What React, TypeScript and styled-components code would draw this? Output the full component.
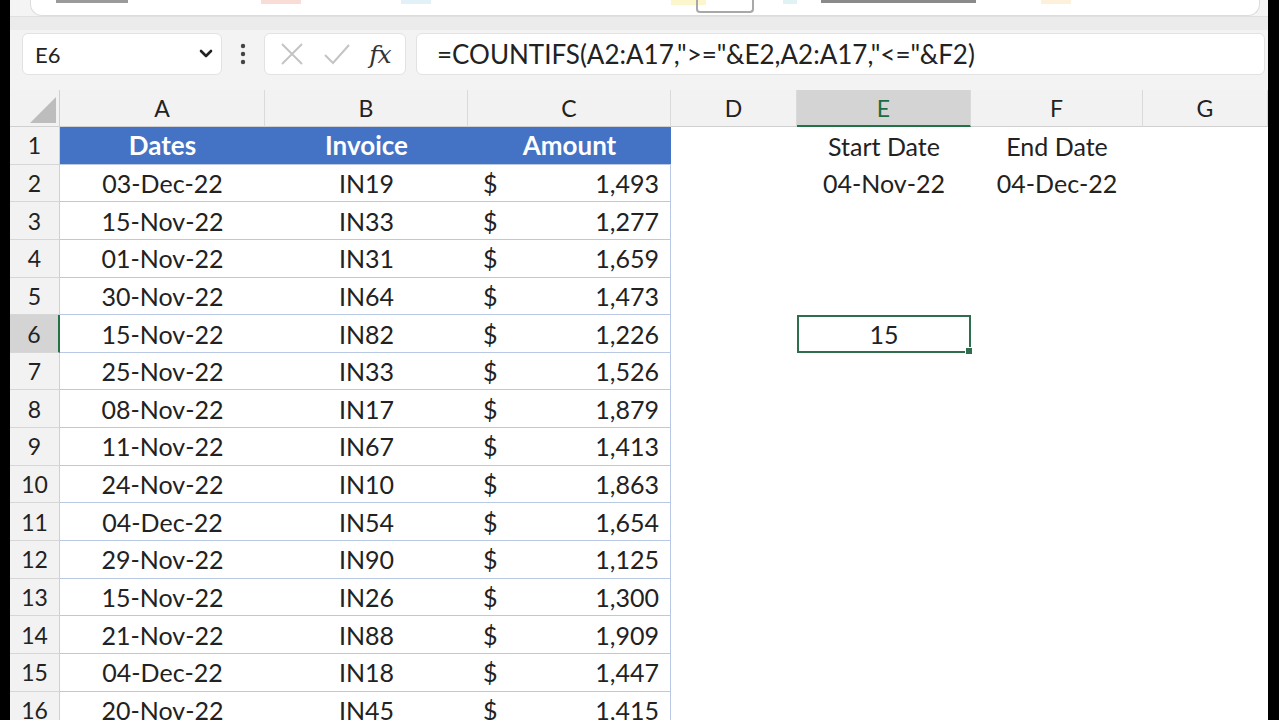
import React from "react";
import styled, { createGlobalStyle } from "styled-components";

const Global = createGlobalStyle`
  html, body { margin: 0; padding: 0; background: #000; }
  body { font-family: Lato, "Open Sans", sans-serif; }
`;

const COLS = "50px 205px 203px 203px 126px 174px 172px 1fr";
const ROW_H = 37.65;

const Frame = styled.div`
  width: 1279px;
  height: 720px;
  box-sizing: border-box;
  padding: 0 11px 0 10px;
  overflow: hidden;
`;

const Window = styled.div`
  height: 100%;
  background: #f2f2f2;
  display: flex;
  flex-direction: column;
  overflow: hidden;
`;

const Ribbon = styled.div`
  flex-shrink: 0;
  height: 16px;
  background: #f4f4f4;
  display: flex;
  padding: 0 8px 0 20px;
`;

const RibbonPanel = styled.div`
  flex: 1;
  background: #fff;
  border: 1px solid #dcdcdc;
  border-top: none;
  border-radius: 0 0 12px 12px;
  position: relative;
`;

const Chip = styled.div<{ $x: number; $w: number; $c: string; $h?: number; $outline?: boolean }>`
  position: absolute;
  left: ${(p) => p.$x}px;
  top: 0;
  width: ${(p) => p.$w}px;
  height: ${(p) => p.$h ?? 3}px;
  background: ${(p) => (p.$outline ? "transparent" : p.$c)};
  border: ${(p) => (p.$outline ? `2px solid ${p.$c}` : "none")};
  border-top: none;
  border-radius: ${(p) => (p.$outline ? "0 0 4px 4px" : "0")};
`;

const Band = styled.div`
  flex-shrink: 0;
  height: 13px;
  background: #ebebeb;
  border-top: 1px solid #e0e0e0;
`;

const FormulaBar = styled.div`
  flex-shrink: 0;
  height: 60px;
  box-sizing: border-box;
  display: flex;
  align-items: flex-start;
  padding: 3px 3px 0 12px;
  background: #f3f3f3;
`;

const NameBox = styled.div`
  width: 200px;
  height: 42px;
  box-sizing: border-box;
  background: #fff;
  border: 1px solid #e2e2e2;
  border-radius: 6px;
  display: flex;
  align-items: center;
  justify-content: space-between;
  padding: 0 8px 0 12px;
  font-size: 22px;
  color: #222;
`;

const Dots = styled.div`
  width: 42px;
  height: 42px;
  display: flex;
  align-items: center;
  justify-content: center;
`;

const IconBox = styled.div`
  width: 142px;
  height: 42px;
  box-sizing: border-box;
  background: #fff;
  border: 1px solid #e2e2e2;
  border-radius: 6px;
  display: flex;
  align-items: center;
  justify-content: space-around;
  padding: 0 6px;
`;

const Fx = styled.span`
  font-family: "DejaVu Serif", "Liberation Serif", serif;
  font-style: italic;
  font-size: 25px;
  color: #333;
  letter-spacing: -1px;
`;

const FormulaInput = styled.div`
  flex: 1;
  margin-left: 10px;
  height: 42px;
  box-sizing: border-box;
  background: #fff;
  border: 1px solid #e2e2e2;
  border-radius: 6px;
  display: flex;
  align-items: center;
  padding-left: 20px;
  font-size: 26px;
  color: #222;
  white-space: nowrap;
`;

const Sheet = styled.div`
  flex: 1;
  min-height: 0;
  overflow: hidden;
  background: #fff;
  display: flex;
  flex-direction: column;
`;

const Row = styled.div<{ $h: number }>`
  flex-shrink: 0;
  display: grid;
  grid-template-columns: ${COLS};
  height: ${(p) => p.$h}px;
`;

const Corner = styled.div`
  background: #f2f2f2;
  border-right: 1px solid #d0d0d0;
  border-bottom: 1px solid #d0d0d0;
  position: relative;
`;

const ColHead = styled.div<{ $sel?: boolean }>`
  background: ${(p) => (p.$sel ? "#d4d4d4" : "#f2f2f2")};
  color: ${(p) => (p.$sel ? "#1d6b40" : "#222")};
  border-right: 1px solid #dadada;
  border-bottom: ${(p) => (p.$sel ? "2px solid #217346" : "1px solid #d0d0d0")};
  display: flex;
  align-items: center;
  justify-content: center;
  font-size: 23px;
  box-sizing: border-box;
`;

const RowHead = styled.div<{ $sel?: boolean }>`
  background: ${(p) => (p.$sel ? "#d4d4d4" : "#f2f2f2")};
  border-right: ${(p) => (p.$sel ? "2px solid #217346" : "1px solid #d0d0d0")};
  border-bottom: 1px solid #d6d6d6;
  display: flex;
  align-items: center;
  justify-content: center;
  font-size: 23px;
  color: #222;
  box-sizing: border-box;
`;

type CellKind = "head" | "table" | "tableLast" | "plain";

const Cell = styled.div<{ $kind: CellKind; $align?: "center" | "split" }>`
  box-sizing: border-box;
  display: flex;
  align-items: center;
  justify-content: ${(p) => (p.$align === "split" ? "space-between" : "center")};
  padding: ${(p) => (p.$align === "split" ? "0 11px 0 15px" : "0")};
  font-size: ${(p) => (p.$kind === "head" ? "26px" : "25px")};
  color: ${(p) => (p.$kind === "head" ? "#fff" : "#222")};
  font-weight: ${(p) => (p.$kind === "head" ? 700 : 400)};
  background: ${(p) => (p.$kind === "head" ? "#4472c4" : "#fff")};
  border-bottom: ${(p) => (p.$kind === "plain" ? "none" : "1px solid #b9c8e4")};
  border-right: ${(p) => (p.$kind === "tableLast" ? "1px solid #b9c8e4" : "none")};
  white-space: nowrap;
`;

const Selected = styled.div`
  box-sizing: border-box;
  border: 2px solid #2f6e4c;
  display: flex;
  align-items: center;
  justify-content: center;
  font-size: 25px;
  color: #222;
  position: relative;
`;

const Handle = styled.span`
  position: absolute;
  right: -4px;
  bottom: -4px;
  width: 6px;
  height: 6px;
  background: #2f6e4c;
  border: 1px solid #fff;
`;

const data: [string, string, string][] = [
  ["03-Dec-22", "IN19", "1,493"],
  ["15-Nov-22", "IN33", "1,277"],
  ["01-Nov-22", "IN31", "1,659"],
  ["30-Nov-22", "IN64", "1,473"],
  ["15-Nov-22", "IN82", "1,226"],
  ["25-Nov-22", "IN33", "1,526"],
  ["08-Nov-22", "IN17", "1,879"],
  ["11-Nov-22", "IN67", "1,413"],
  ["24-Nov-22", "IN10", "1,863"],
  ["04-Dec-22", "IN54", "1,654"],
  ["29-Nov-22", "IN90", "1,125"],
  ["15-Nov-22", "IN26", "1,300"],
  ["21-Nov-22", "IN88", "1,909"],
  ["04-Dec-22", "IN18", "1,447"],
  ["20-Nov-22", "IN45", "1,415"],
];

const extra: Record<number, [string, string]> = {
  2: ["04-Nov-22", "04-Dec-22"],
};

const letters = ["A", "B", "C", "D", "E", "F", "G"];

export default function App() {
  return (
    <Frame>
      <Global />
      <Window>
        <Ribbon>
          <RibbonPanel>
            <Chip $x={25} $w={72} $c="#9a9a9a" />
            <Chip $x={230} $w={40} $c="#f8dcd5" $h={4} />
            <Chip $x={370} $w={30} $c="#e2f1f8" $h={4} />
            <Chip $x={640} $w={35} $c="#fbf6cc" $h={5} />
            <Chip $x={665} $w={54} $c="#a8a8a8" $h={11} $outline />
            <Chip $x={752} $w={14} $c="#dff3f5" $h={4} />
            <Chip $x={790} $w={155} $c="#8a8a8a" $h={3} />
            <Chip $x={1010} $w={30} $c="#fdf1dc" $h={4} />
          </RibbonPanel>
        </Ribbon>
        <Band />
        <FormulaBar>
          <NameBox>
            <span>E6</span>
            <svg width="14" height="10" viewBox="0 0 14 10">
              <path d="M2 2 L7 7 L12 2" fill="none" stroke="#222" strokeWidth="2.6" strokeLinecap="round" strokeLinejoin="round" />
            </svg>
          </NameBox>
          <Dots>
            <svg width="6" height="22" viewBox="0 0 6 22">
              <circle cx="3" cy="3" r="2.2" fill="#444" />
              <circle cx="3" cy="11" r="2.2" fill="#444" />
              <circle cx="3" cy="19" r="2.2" fill="#444" />
            </svg>
          </Dots>
          <IconBox>
            <svg width="26" height="26" viewBox="0 0 26 26">
              <path d="M3 3 L23 23 M23 3 L3 23" stroke="#c4c4c4" strokeWidth="2" fill="none" />
            </svg>
            <svg width="30" height="26" viewBox="0 0 30 26">
              <path d="M3 14 L11 22 L27 4" stroke="#c4c4c4" strokeWidth="2" fill="none" />
            </svg>
            <Fx>fx</Fx>
          </IconBox>
          <FormulaInput>=COUNTIFS(A2:A17,"&gt;="&amp;E2,A2:A17,"&lt;="&amp;F2)</FormulaInput>
        </FormulaBar>
        <Sheet>
          <Row $h={37}>
            <Corner>
              <svg width="26" height="26" viewBox="0 0 26 26" style={{ position: "absolute", right: 3, bottom: 3 }}>
                <path d="M26 0 L26 26 L0 26 Z" fill="#bdbdbd" />
              </svg>
            </Corner>
            {letters.map((l) => (
              <ColHead key={l} $sel={l === "E"}>
                {l}
              </ColHead>
            ))}
          </Row>
          <Row $h={ROW_H}>
            <RowHead>1</RowHead>
            <Cell $kind="head">Dates</Cell>
            <Cell $kind="head">Invoice</Cell>
            <Cell $kind="head">Amount</Cell>
            <Cell $kind="plain" />
            <Cell $kind="plain">Start Date</Cell>
            <Cell $kind="plain">End Date</Cell>
            <Cell $kind="plain" />
          </Row>
          {data.map((r, i) => {
            const n = i + 2;
            const ex = extra[n];
            return (
              <Row $h={ROW_H} key={n}>
                <RowHead $sel={n === 6}>{n}</RowHead>
                <Cell $kind="table">{r[0]}</Cell>
                <Cell $kind="table">{r[1]}</Cell>
                <Cell $kind="tableLast" $align="split">
                  <span>$</span>
                  <span>{r[2]}</span>
                </Cell>
                <Cell $kind="plain" />
                {n === 6 ? (
                  <Selected>
                    15
                    <Handle />
                  </Selected>
                ) : (
                  <Cell $kind="plain">{ex ? ex[0] : ""}</Cell>
                )}
                <Cell $kind="plain">{ex ? ex[1] : ""}</Cell>
                <Cell $kind="plain" />
              </Row>
            );
          })}
        </Sheet>
      </Window>
    </Frame>
  );
}
